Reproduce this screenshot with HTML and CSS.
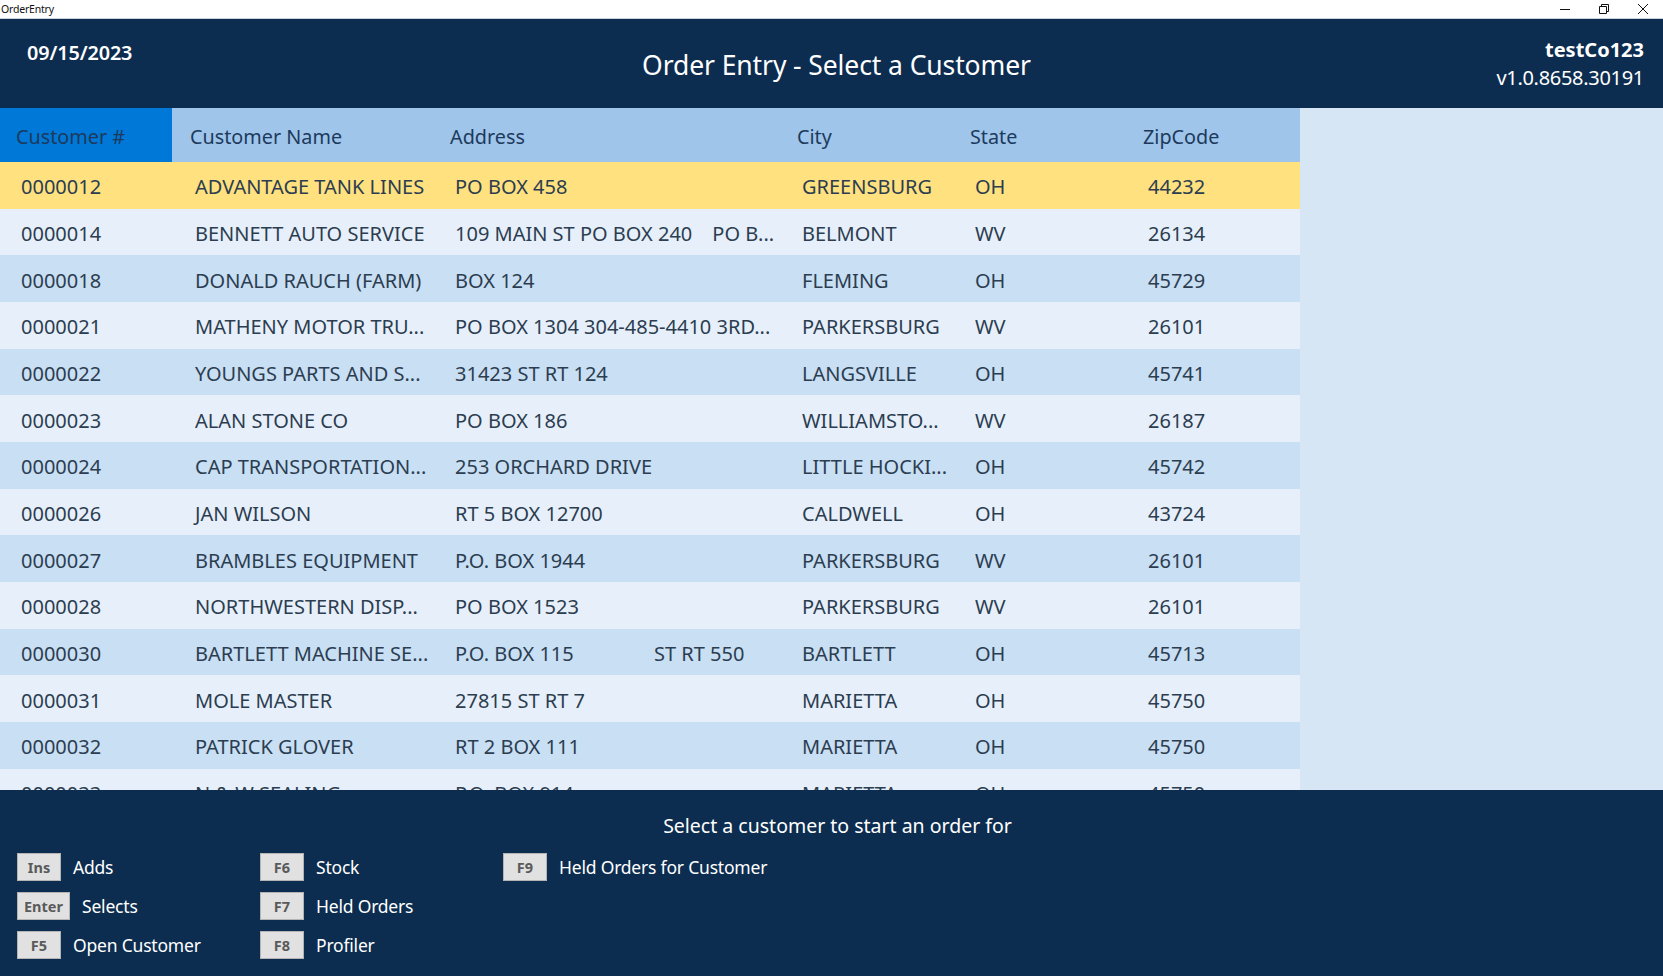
FILE: index.html
```html
<!DOCTYPE html>
<html>
<head>
<meta charset="utf-8">
<link rel="stylesheet" href="styles.css">
</head>
<body>
<div class="titlebar">
  <span class="app-name">OrderEntry</span>
  <div class="winctl">
    <svg width="12" height="12" viewBox="0 0 12 12"><path d="M1 6.5h10" stroke="#111" stroke-width="1"/></svg>
    <svg width="12" height="12" viewBox="0 0 12 12"><path d="M1.5 3.5h7v7h-7z M3.5 3.5v-2h7v7h-2" fill="none" stroke="#111" stroke-width="1"/></svg>
    <svg width="12" height="12" viewBox="0 0 12 12"><path d="M1 1l10 10M11 1L1 11" stroke="#111" stroke-width="1"/></svg>
  </div>
</div>
<header class="top">
  <div class="date">09/15/2023</div>
  <h1 class="title">Order Entry - Select a Customer</h1>
  <div class="company">
    <div class="co-name">testCo123</div>
    <div class="co-ver">v1.0.8658.30191</div>
  </div>
</header>
<main class="main">
  <div class="table">
    <div class="row head">
      <div class="cell sel">Customer #</div>
      <div class="cell">Customer Name</div>
      <div class="cell">Address</div>
      <div class="cell">City</div>
      <div class="cell">State</div>
      <div class="cell">ZipCode</div>
    </div>
    <div class="row current"><div class="cell">0000012</div><div class="cell">ADVANTAGE TANK LINES</div><div class="cell">PO BOX 458</div><div class="cell">GREENSBURG</div><div class="cell">OH</div><div class="cell">44232</div></div>
    <div class="row light"><div class="cell">0000014</div><div class="cell">BENNETT AUTO SERVICE</div><div class="cell">109 MAIN ST PO BOX 240<span class="addr2 near">PO B...</span></div><div class="cell">BELMONT</div><div class="cell">WV</div><div class="cell">26134</div></div>
    <div class="row dark"><div class="cell">0000018</div><div class="cell">DONALD RAUCH (FARM)</div><div class="cell">BOX 124</div><div class="cell">FLEMING</div><div class="cell">OH</div><div class="cell">45729</div></div>
    <div class="row light"><div class="cell">0000021</div><div class="cell">MATHENY MOTOR TRU...</div><div class="cell">PO BOX 1304 304-485-4410 3RD...</div><div class="cell">PARKERSBURG</div><div class="cell">WV</div><div class="cell">26101</div></div>
    <div class="row dark"><div class="cell">0000022</div><div class="cell">YOUNGS PARTS AND S...</div><div class="cell">31423 ST RT 124</div><div class="cell">LANGSVILLE</div><div class="cell">OH</div><div class="cell">45741</div></div>
    <div class="row light"><div class="cell">0000023</div><div class="cell">ALAN STONE CO</div><div class="cell">PO BOX 186</div><div class="cell">WILLIAMSTO...</div><div class="cell">WV</div><div class="cell">26187</div></div>
    <div class="row dark"><div class="cell">0000024</div><div class="cell">CAP TRANSPORTATION...</div><div class="cell">253 ORCHARD DRIVE</div><div class="cell">LITTLE HOCKI...</div><div class="cell">OH</div><div class="cell">45742</div></div>
    <div class="row light"><div class="cell">0000026</div><div class="cell">JAN WILSON</div><div class="cell">RT 5 BOX 12700</div><div class="cell">CALDWELL</div><div class="cell">OH</div><div class="cell">43724</div></div>
    <div class="row dark"><div class="cell">0000027</div><div class="cell">BRAMBLES EQUIPMENT</div><div class="cell">P.O. BOX 1944</div><div class="cell">PARKERSBURG</div><div class="cell">WV</div><div class="cell">26101</div></div>
    <div class="row light"><div class="cell">0000028</div><div class="cell">NORTHWESTERN DISP...</div><div class="cell">PO BOX 1523</div><div class="cell">PARKERSBURG</div><div class="cell">WV</div><div class="cell">26101</div></div>
    <div class="row dark"><div class="cell">0000030</div><div class="cell">BARTLETT MACHINE SE...</div><div class="cell addr-split"><span class="addr1">P.O. BOX 115</span><span class="addr2">ST RT 550</span></div><div class="cell">BARTLETT</div><div class="cell">OH</div><div class="cell">45713</div></div>
    <div class="row light"><div class="cell">0000031</div><div class="cell">MOLE MASTER</div><div class="cell">27815 ST RT 7</div><div class="cell">MARIETTA</div><div class="cell">OH</div><div class="cell">45750</div></div>
    <div class="row dark"><div class="cell">0000032</div><div class="cell">PATRICK GLOVER</div><div class="cell">RT 2 BOX 111</div><div class="cell">MARIETTA</div><div class="cell">OH</div><div class="cell">45750</div></div>
    <div class="row light"><div class="cell">0000033</div><div class="cell">N &amp; W SEALING</div><div class="cell">P.O. BOX 914</div><div class="cell">MARIETTA</div><div class="cell">OH</div><div class="cell">45750</div></div>
  </div>
  <div class="side"></div>
</main>
<footer class="foot">
  <div class="hint">Select a customer to start an order for</div>
  <div class="keys">
    <div class="key-col">
      <div class="key"><span class="kbd">Ins</span><span class="klabel">Adds</span></div>
      <div class="key"><span class="kbd wide">Enter</span><span class="klabel">Selects</span></div>
      <div class="key"><span class="kbd">F5</span><span class="klabel">Open Customer</span></div>
    </div>
    <div class="key-col">
      <div class="key"><span class="kbd">F6</span><span class="klabel">Stock</span></div>
      <div class="key"><span class="kbd">F7</span><span class="klabel">Held Orders</span></div>
      <div class="key"><span class="kbd">F8</span><span class="klabel">Profiler</span></div>
    </div>
    <div class="key-col">
      <div class="key"><span class="kbd">F9</span><span class="klabel">Held Orders for Customer</span></div>
    </div>
  </div>
</footer>
</body>
</html>
```
FILE: styles.css
```css
* { box-sizing: border-box; }
html, body { margin: 0; padding: 0; }
body {
  width: 1663px;
  height: 976px;
  overflow: hidden;
  font-family: "Segoe UI", "Noto Sans", "Open Sans", sans-serif;
  display: flex;
  flex-direction: column;
  background: #0c2d50;
}
.titlebar {
  height: 19px;
  background: #ffffff;
  border-bottom: 1px solid #c9d3de;
  display: flex;
  align-items: center;
  justify-content: space-between;
  flex: none;
}
.app-name {
  font-size: 10.5px;
  color: #111;
  padding-left: 1px;
  letter-spacing: -0.2px;
}
.winctl {
  display: flex;
  gap: 27px;
  padding-right: 14px;
  align-items: center;
  height: 100%;
}
.winctl svg { display: block; }

.top {
  height: 89px;
  flex: none;
  background: #0c2d50;
  color: #ffffff;
  display: grid;
  grid-template-columns: 1fr auto 1fr;
}
.date {
  font-size: 19.8px;
  font-weight: 600;
  padding: 20px 0 0 27px;
  letter-spacing: -0.1px;
}
.title {
  margin: 0;
  font-size: 26.5px;
  font-weight: 400;
  padding-top: 28px;
  padding-left: 10px;
  letter-spacing: -0.1px;
}
.company {
  text-align: right;
  padding: 17px 19px 0 0;
}
.co-name {
  font-weight: 700;
  font-size: 20px;
  line-height: 28px;
}
.co-ver {
  font-size: 20px;
  line-height: 28px;
  letter-spacing: -0.3px;
}

.main {
  height: 682px;
  flex: none;
  display: flex;
  background: #d6e6f5;
  overflow: hidden;
}
.table {
  width: 1300px;
  flex: none;
  display: flex;
  flex-direction: column;
}
.row {
  display: grid;
  grid-template-columns: 172px 260px 347px 173px 173px 175px;
  height: 46.67px;
  align-items: center;
  flex: none;
  color: #2c3d50;
  font-size: 20px;
}
.row .cell {
  padding-left: 23px;
  padding-top: 3px;
  white-space: nowrap;
  overflow: hidden;
}
.row .cell:first-child { padding-left: 21px; }
.row.head {
  height: 54px;
  background: #9fc5eb;
  color: #1d3a5c;
  font-size: 19.8px;
}
.row.head .cell {
  padding-left: 18px;
  padding-top: 2px;
  height: 100%;
  display: flex;
  align-items: center;
}
.row.head .cell.sel {
  background: #0078d7;
  padding-left: 16px;
}
.row.current { background: #ffe17f; }
.row.light { background: #e7f0fa; }
.row.dark { background: #c9dff4; }
.addr2.near { margin-left: 20px; }
.addr-split { display: flex; }
.addr-split .addr1 { width: 199px; flex: none; }
.side { flex: 1; background: #d6e6f5; }

.foot {
  flex: 1;
  background: #0c2d50;
  color: #ffffff;
  display: flex;
  flex-direction: column;
}
.hint {
  text-align: center;
  font-size: 19.5px;
  padding: 22px 0 0 12px;
  height: 63px;
}
.keys {
  display: grid;
  grid-template-columns: 243px 243px 400px;
  padding-left: 17px;
}
.key-col {
  display: flex;
  flex-direction: column;
  gap: 11px;
}
.key {
  display: flex;
  align-items: center;
  gap: 12px;
  height: 28px;
}
.kbd {
  width: 44px;
  height: 28px;
  background: #e1e1e1;
  border: 1px solid #b4b4b4;
  color: #5a5a5a;
  font-weight: 700;
  font-size: 14.5px;
  display: flex;
  align-items: center;
  justify-content: center;
  flex: none;
}
.kbd.wide { width: 53px; }
.klabel {
  font-size: 17.5px;
  letter-spacing: -0.2px;
}
```
